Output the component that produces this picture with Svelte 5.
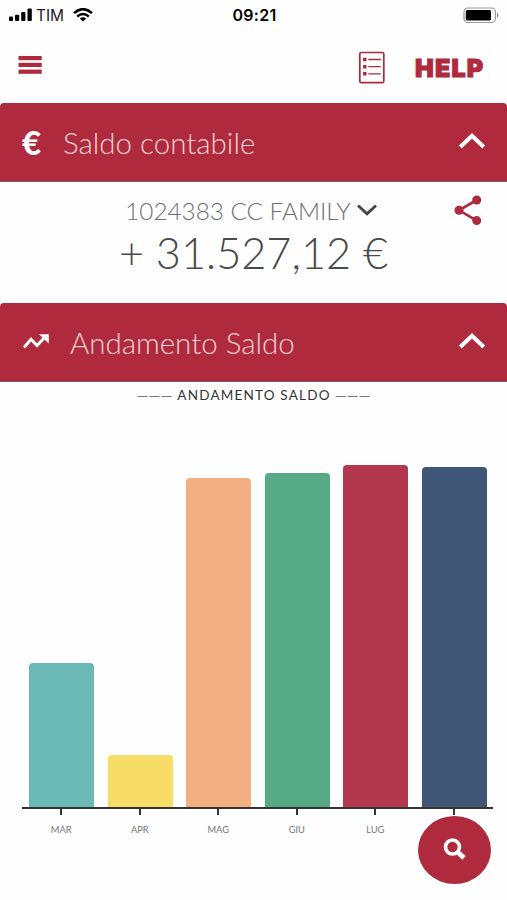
<script>
	const months = [
		{ label: 'MAR', height: 144.5, color: '#6bb9b6' },
		{ label: 'APR', height: 52.5, color: '#f8dc68' },
		{ label: 'MAG', height: 329, color: '#f1af82' },
		{ label: 'GIU', height: 334.5, color: '#56aa85' },
		{ label: 'LUG', height: 342.5, color: '#b3384d' },
		{ label: 'AGO', height: 340, color: '#3f5677' }
	];

	let showBalance = $state(true);
	let showTrend = $state(true);
</script>

{#snippet chevron()}
	<svg class="chevron" width="28" height="18" viewBox="0 0 28 18">
		<path d="M2.2 15 14 3.8 25.8 15" fill="none" stroke="#fff" stroke-width="4" />
	</svg>
{/snippet}

<div class="screen">
	<div class="status">
		<div class="carrier">
			<svg width="24" height="14" viewBox="0 0 24 14">
				<rect x="0" y="8.5" width="4" height="4.5" rx="1" />
				<rect x="6" y="6.8" width="4.2" height="6.2" rx="1" />
				<rect x="12.2" y="4" width="4.2" height="9" rx="1" />
				<rect x="18.5" y="0.5" width="4.3" height="12.5" rx="1" />
			</svg>
			<span class="tim">TIM</span>
			<svg class="wifi" width="20" height="14" viewBox="0 0 20 14" fill="none" stroke="#000">
				<path d="M1 5.1Q10-2.8 19 5.1" stroke-width="2.5" />
				<path d="M4.2 8.5Q10 3.5 15.8 8.5" stroke-width="2.4" />
				<path d="M6.8 10.4Q10 8 13.2 10.4L10 13.5Z" fill="#000" stroke="none" />
			</svg>
		</div>
		<span class="time">09:21</span>
		<svg class="battery" width="37" height="17" viewBox="0 0 37 17">
			<rect x="1" y="1" width="31.5" height="14.5" rx="4" fill="none" stroke="#999" stroke-width="1.2" />
			<rect x="2.8" y="3" width="25.2" height="10.6" rx="1.5" />
			<path d="M34 5.5Q37 8.3 34 11Z" fill="#888" />
		</svg>
	</div>

	<header>
		<svg class="menu" width="24" height="20" viewBox="0 0 24 20" fill="#ae2a3c">
			<rect x="0.5" y="1" width="23.2" height="4.2" />
			<rect x="0.5" y="7.8" width="23.2" height="4.2" />
			<rect x="0.5" y="14.6" width="23.2" height="4.2" />
		</svg>
		<svg class="list" width="28" height="34" viewBox="0 0 28 34" fill="none" stroke="#ae2a3c">
			<rect x="1.8" y="1.5" width="24" height="30.2" rx="1.5" stroke-width="1.7" />
			<path d="M10.3 8.5H22.8M10.3 15.7H22.8M10.3 22.8H22.8" stroke-width="1.3" />
			<path d="M5.1 8.5h3.4M5.1 15.7h3.4M5.1 22.8h3.4" stroke-width="3.6" />
		</svg>
		<span class="help">HELP</span>
	</header>

	<button class="bar" onclick={() => (showBalance = !showBalance)}>
		<span class="euro">€</span>
		<span class="label">Saldo contabile</span>
		{@render chevron()}
	</button>

	{#if showBalance}
		<section class="balance">
			<div class="account">
				<span class="account-name">1024383 CC FAMILY</span>
				<svg width="22" height="14" viewBox="0 0 22 14">
					<path d="M2 2.500 11 10.800 20 2.500" fill="none" stroke="#444" stroke-width="2.800" />
				</svg>
			</div>
			<div class="amount"><span>+ 31.527,12 €</span></div>
			<svg class="share" width="28" height="31" viewBox="0 0 28 31" fill="#ae2a3c">
				<path d="M22.8 5 5 15.3 22.8 25.6" fill="none" stroke="#ae2a3c" stroke-width="2.6" />
				<circle cx="22.7" cy="5" r="4.5" />
				<circle cx="5" cy="15.3" r="4.5" />
				<circle cx="22.7" cy="25.6" r="4.5" />
			</svg>
		</section>
	{/if}

	<button class="bar" onclick={() => (showTrend = !showTrend)}>
		<svg class="trend" width="28" height="18" viewBox="0 0 28 18">
			<path d="M2 14.500 9 6.200 15 12.500 23 4" fill="none" stroke="#fff" stroke-width="3" />
			<path d="M17 1.300H26.800V10.600Z" fill="#fff" />
		</svg>
		<span class="label trend-label">Andamento Saldo</span>
		{@render chevron()}
	</button>

	{#if showTrend}
		<section class="chart">
			<h2><span>———</span><span class="title">ANDAMENTO SALDO</span><span>———</span></h2>
			<div class="plot">
				{#each months as m}
					<div class="column" style="height: {m.height}px; background: {m.color}"></div>
				{/each}
			</div>
			<div class="axis">
				{#each months as m}
					<div class="tick"><span>{m.label}</span></div>
				{/each}
			</div>
		</section>
	{/if}

	<button class="fab" aria-label="Cerca">
		<svg width="24" height="24" viewBox="0 0 24 24" fill="none" stroke="#fff">
			<circle cx="9.5" cy="9" r="7" stroke-width="3.6" />
			<path d="M14.500 14 21 19.800" stroke-width="5" />
		</svg>
	</button>
</div>

<style>
	:global(body) {
		background: #fefefe;
	}

	.screen {
		position: relative;
		width: 507px;
		height: 900px;
		overflow: hidden;
		background: #fefefe;
		font-family: Lato, sans-serif;
	}

	svg {
		display: block;
		flex: none;
	}

	button {
		border: 0;
		font: inherit;
		text-align: left;
	}

	span {
		white-space: pre;
	}

	.status {
		display: grid;
		grid-template-columns: 1fr auto 1fr;
		align-items: center;
		box-sizing: border-box;
		height: 30px;
		padding: 0 7px 0 9px;
		font-family: Inter, sans-serif;
		font-size: 16px;
	}

	.carrier {
		display: flex;
		align-items: center;
	}

	.tim {
		margin-left: 3px;
		width: 28px;
		color: #222;
		font-size: 15.5px;
		letter-spacing: -0.1px;
	}

	.wifi {
		margin-left: 9px;
	}

	.time {
		font-weight: 600;
		letter-spacing: 0.3px;
	}

	.battery {
		justify-self: end;
	}

	header {
		display: flex;
		align-items: center;
		box-sizing: border-box;
		height: 73px;
		padding: 0 22px 0 18px;
		color: #ae2a3c;
	}

	.menu {
		margin: 0 auto 4px 0;
	}

	.list {
		margin: 2px 29px 0 0;
	}

	.help {
		width: 70px;
		margin-top: 3px;
		font-family: Inter, sans-serif;
		font-weight: 900;
		font-size: 25px;
		letter-spacing: 1.2px;
		-webkit-text-stroke: 1px #ae2a3c;
	}

	.bar {
		display: flex;
		align-items: center;
		box-sizing: border-box;
		width: 100%;
		height: 79px;
		padding: 0 21px 0 22px;
		border-bottom: 1px solid #8d5560;
		border-radius: 4px 4px 0 0;
		background: #ae2a3c;
		color: #fff;
	}

	.euro {
		width: 41px;
		font-weight: 900;
		font-size: 33px;
	}

	.label {
		color: #fbd3d7;
		font-weight: 300;
		font-size: 29.5px;
	}

	.trend-label {
		margin-left: 20px;
	}

	.chevron {
		margin: 0 0 2px auto;
	}

	.balance {
		position: relative;
		height: 121px;
		box-sizing: border-box;
		padding-top: 13px;
	}

	.account {
		display: flex;
		justify-content: center;
		align-items: center;
		gap: 5px;
		height: 30px;
		padding-right: 4px;
		color: #707070;
		font-weight: 300;
		font-size: 24.3px;
	}

	.amount {
		display: flex;
		justify-content: center;
		height: 54px;
		color: #4a4a4a;
		font-weight: 300;
		font-size: 43.3px;
		line-height: 54px;
	}

	.share {
		position: absolute;
		top: 13px;
		right: 25px;
	}

	h2 {
		display: flex;
		justify-content: center;
		gap: 5px;
		margin: 0;
		height: 26px;
		color: #777;
		font-weight: 400;
		font-size: 15px;
		line-height: 26px;
	}

	.title {
		color: #333;
		font-size: 13.5px;
		letter-spacing: 1.2px;
		margin-right: -1px;
	}

	.plot,
	.axis {
		display: grid;
		grid-template-columns: repeat(6, 1fr);
		width: 471px;
		margin-left: 22px;
	}

	.plot {
		align-items: end;
		height: 399px;
	}

	.column {
		width: 65px;
		margin-left: 7px;
		border-radius: 4px 4px 0 0;
	}

	.axis {
		border-top: 2px solid #333;
	}

	.tick {
		display: flex;
		flex-direction: column;
		align-items: center;
		color: #777;
		font-size: 9.3px;
		line-height: 14px;
	}

	.tick::before {
		content: '';
		width: 2px;
		height: 6px;
		margin-bottom: 8px;
		background: #333;
	}

	.fab {
		position: absolute;
		top: 816px;
		left: 418px;
		display: flex;
		align-items: center;
		justify-content: center;
		width: 73px;
		height: 68px;
		padding: 0;
		border-radius: 50%;
		background: #ae2a3c;
	}
</style>
